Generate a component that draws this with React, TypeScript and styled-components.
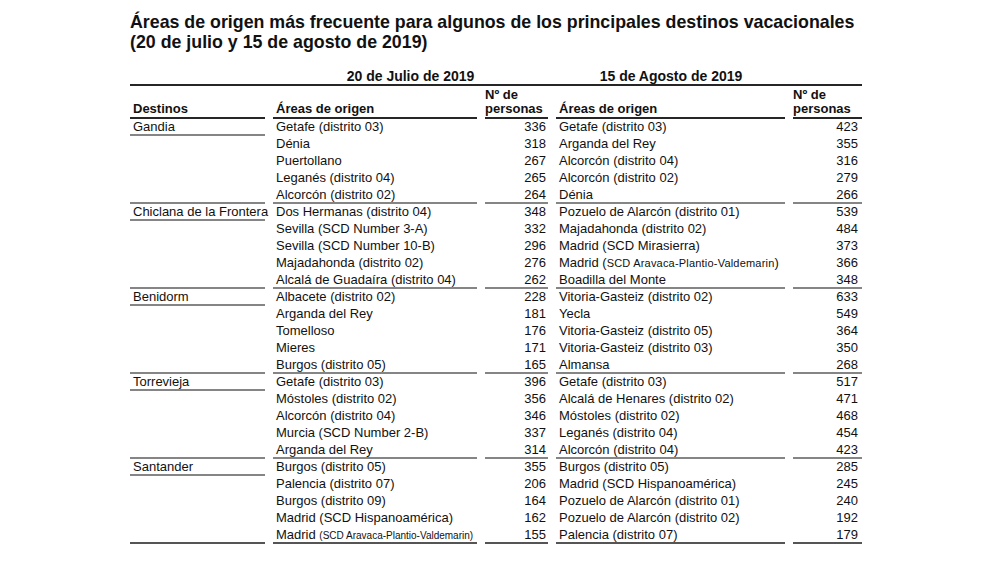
import React from "react";
import styled, { createGlobalStyle } from "styled-components";

const Global = createGlobalStyle`
  html, body { margin: 0; padding: 0; background: #ffffff; }
  body { font-family: "Liberation Sans", Arial, sans-serif; color: #111; }
`;

const Page = styled.div`
  width: 1000px;
  height: 567px;
  box-sizing: border-box;
  padding: 12px 0 0 130px;
  overflow: hidden;
`;

const Title = styled.h1`
  margin: 0;
  font-size: 17.8px;
  line-height: 20px;
  font-weight: 700;
  color: #111;
  white-space: nowrap;
`;

const cols = "135px 204px 63px 229px 69px";

const PeriodRow = styled.div`
  margin-top: 16px;
  width: 732px;
  display: grid;
  grid-template-columns: ${cols};
  column-gap: 8px;
  border-bottom: 2px solid #262626;
`;

const Period = styled.div<{ $shift?: number }>`
  grid-column: span 2;
  font-size: 14px;
  line-height: 16px;
  font-weight: 700;
  text-align: center;
  padding-right: ${(p) => p.$shift ?? 0}px;
`;

const Table = styled.div`
  display: grid;
  grid-template-columns: ${cols};
  column-gap: 8px;
  width: 732px;
`;

const HeadCell = styled.div<{ $pad?: number }>`
  height: 33px;
  box-sizing: border-box;
  display: flex;
  align-items: flex-end;
  padding: 0 0 1px ${(p) => p.$pad ?? 3}px;
  font-size: 13px;
  line-height: 14px;
  font-weight: 700;
  border-bottom: 2px solid #262626;
`;

type Line = "none" | "group" | "end";

const lineColor: Record<Line, string> = {
  none: "transparent",
  group: "#858585",
  end: "#555555",
};

const Cell = styled.div<{ $line: Line; $num?: boolean; $padR?: number }>`
  height: 17px;
  box-sizing: border-box;
  font-size: 13px;
  line-height: 15px;
  white-space: nowrap;
  overflow: visible;
  padding: 0 ${(p) => (p.$num ? p.$padR ?? 2 : 0)}px 0 ${(p) => (p.$num ? 0 : 3)}px;
  text-align: ${(p) => (p.$num ? "right" : "left")};
  border-bottom: 2px solid ${(p) => lineColor[p.$line]};
`;

const Small = styled.span<{ $size: number; $spacing: number }>`
  font-size: ${(p) => p.$size}px;
  letter-spacing: ${(p) => p.$spacing}px;
`;

type Row = [React.ReactNode, number, React.ReactNode, number];

const madridSmallLeft = (
  <>
    Madrid <Small $size={10} $spacing={0}>(SCD Aravaca-Plantio-Valdemarin)</Small>
  </>
);

const madridSmallRight = (
  <>
    Madrid (<Small $size={11} $spacing={0.2}>SCD Aravaca-Plantio-Valdemarin</Small>)
  </>
);

const groups: { dest: string; rows: Row[] }[] = [
  {
    dest: "Gandia",
    rows: [
      ["Getafe (distrito 03)", 336, "Getafe (distrito 03)", 423],
      ["Dénia", 318, "Arganda del Rey", 355],
      ["Puertollano", 267, "Alcorcón (distrito 04)", 316],
      ["Leganés (distrito 04)", 265, "Alcorcón (distrito 02)", 279],
      ["Alcorcón (distrito 02)", 264, "Dénia", 266],
    ],
  },
  {
    dest: "Chiclana de la Frontera",
    rows: [
      ["Dos Hermanas (distrito 04)", 348, "Pozuelo de Alarcón (distrito 01)", 539],
      ["Sevilla (SCD Number 3-A)", 332, "Majadahonda (distrito 02)", 484],
      ["Sevilla (SCD Number 10-B)", 296, "Madrid (SCD Mirasierra)", 373],
      ["Majadahonda (distrito 02)", 276, madridSmallRight, 366],
      ["Alcalá de Guadaíra (distrito 04)", 262, "Boadilla del Monte", 348],
    ],
  },
  {
    dest: "Benidorm",
    rows: [
      ["Albacete (distrito 02)", 228, "Vitoria-Gasteiz (distrito 02)", 633],
      ["Arganda del Rey", 181, "Yecla", 549],
      ["Tomelloso", 176, "Vitoria-Gasteiz (distrito 05)", 364],
      ["Mieres", 171, "Vitoria-Gasteiz (distrito 03)", 350],
      ["Burgos (distrito 05)", 165, "Almansa", 268],
    ],
  },
  {
    dest: "Torrevieja",
    rows: [
      ["Getafe (distrito 03)", 396, "Getafe (distrito 03)", 517],
      ["Móstoles (distrito 02)", 356, "Alcalá de Henares (distrito 02)", 471],
      ["Alcorcón (distrito 04)", 346, "Móstoles (distrito 02)", 468],
      ["Murcia (SCD Number 2-B)", 337, "Leganés (distrito 04)", 454],
      ["Arganda del Rey", 314, "Alcorcón (distrito 04)", 423],
    ],
  },
  {
    dest: "Santander",
    rows: [
      ["Burgos (distrito 05)", 355, "Burgos (distrito 05)", 285],
      ["Palencia (distrito 07)", 206, "Madrid (SCD Hispanoamérica)", 245],
      ["Burgos (distrito 09)", 164, "Pozuelo de Alarcón (distrito 01)", 240],
      ["Madrid (SCD Hispanoamérica)", 162, "Pozuelo de Alarcón (distrito 02)", 192],
      [madridSmallLeft, 155, "Palencia (distrito 07)", 179],
    ],
  },
];

export default function App() {
  return (
    <Page>
      <Global />
      <Title>
        Áreas de origen más frecuente para algunos de los principales destinos vacacionales
        <br />
        (20 de julio y 15 de agosto de 2019)
      </Title>
      <PeriodRow>
        <div />
        <Period>20 de Julio de 2019</Period>
        <Period $shift={76}>15 de Agosto de 2019</Period>
      </PeriodRow>
      <Table>
        <HeadCell>Destinos</HeadCell>
        <HeadCell>Áreas de origen</HeadCell>
        <HeadCell $pad={0}>
          Nº de
          <br />
          personas
        </HeadCell>
        <HeadCell>Áreas de origen</HeadCell>
        <HeadCell $pad={0}>
          Nº de
          <br />
          personas
        </HeadCell>
        {groups.map((g, gi) =>
          g.rows.map((r, ri) => {
            const lastGroup = gi === groups.length - 1;
            const lastRow = ri === g.rows.length - 1;
            const rowLine: Line = lastRow ? (lastGroup ? "end" : "group") : "none";
            const destLine: Line = ri === 0 ? "group" : rowLine;
            return (
              <React.Fragment key={`${gi}-${ri}`}>
                <Cell $line={destLine}>{ri === 0 ? g.dest : ""}</Cell>
                <Cell $line={rowLine}>{r[0]}</Cell>
                <Cell $line={rowLine} $num $padR={2}>
                  {r[1]}
                </Cell>
                <Cell $line={rowLine}>{r[2]}</Cell>
                <Cell $line={rowLine} $num $padR={4}>
                  {r[3]}
                </Cell>
              </React.Fragment>
            );
          })
        )}
      </Table>
    </Page>
  );
}
